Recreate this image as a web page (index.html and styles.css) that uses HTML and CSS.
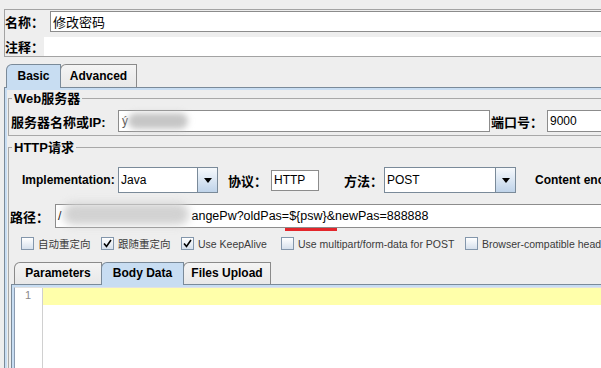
FILE: index.html
```html
<!DOCTYPE html>
<html lang="zh-CN">
<head>
    <meta charset="UTF-8">
    <title>HTTP请求</title>
    <link rel="stylesheet" href="styles.css">
</head>
<body>
<div class="page">
    <div class="meta">
        <div class="metaRow nameRow">
            <span class="label nameLabel">名称：</span>
            <div class="field nameField">修改密码</div>
        </div>
        <div class="metaRow commentRow">
            <span class="label commentLabel">注释：</span>
            <div class="commentArea"></div>
        </div>
    </div>

    <div class="tabbedPanels">
        <ul class="tabGroup">
            <li class="tab basicTab selectedTab">Basic</li>
            <li class="tab advancedTab">Advanced</li>
        </ul>
        <div class="tabContent">
            <div class="group webGroup">
                <div class="groupTitle">Web服务器</div>
                <div class="row serverRow">
                    <span class="label serverLabel">服务器名称或IP:</span>
                    <div class="field serverField"><span class="glyph">ý</span><span class="smudge"></span></div>
                    <span class="label portLabel">端口号：</span>
                    <div class="field portField">9000</div>
                </div>
            </div>

            <div class="group httpGroup">
                <div class="groupTitle">HTTP请求</div>
                <div class="row implRow">
                    <span class="label latin implLabel">Implementation:</span>
                    <div class="combo implCombo">
                        <span class="comboValue">Java</span>
                        <span class="comboButton"><i class="arrow"></i></span>
                    </div>
                    <span class="label protoLabel">协议：</span>
                    <div class="field protoField">HTTP</div>
                    <span class="label methodLabel">方法：</span>
                    <div class="combo methodCombo">
                        <span class="comboValue">POST</span>
                        <span class="comboButton"><i class="arrow"></i></span>
                    </div>
                    <span class="label latin encLabel">Content encoding:</span>
                </div>
                <div class="row pathRow">
                    <span class="label pathLabel">路径：</span>
                    <div class="field pathField">/<span class="smudge pathSmudge"></span>angePw?oldPas=${psw}&amp;newPas=888888</div>
                    <div class="mark"></div>
                </div>
                <div class="row checkRow">
                    <label class="check"><span class="box"></span>自动重定向</label>
                    <label class="check"><span class="box checked"><svg viewBox="0 0 11 11" width="11" height="11"><path d="M2 5.5 L4.5 8.5 L9 2" fill="none" stroke="#000" stroke-width="1.6"/></svg></span>跟随重定向</label>
                    <label class="check keepAlive"><span class="box checked"><svg viewBox="0 0 11 11" width="11" height="11"><path d="M2 5.5 L4.5 8.5 L9 2" fill="none" stroke="#000" stroke-width="1.6"/></svg></span>Use KeepAlive</label>
                    <label class="check multipart"><span class="box"></span>Use multipart/form-data for POST</label>
                    <label class="check browserCompat"><span class="box"></span>Browser-compatible headers</label>
                </div>

                <div class="subTabs">
                    <ul class="tabGroup subTabGroup">
                        <li class="tab paramTab">Parameters</li>
                        <li class="tab bodyTab selectedTab">Body Data</li>
                        <li class="tab filesTab">Files Upload</li>
                    </ul>
                    <div class="tabContent subContent">
                        <div class="editor">
                            <div class="gutter">1</div>
                            <div class="lines"><div class="currentLine"></div></div>
                        </div>
                    </div>
                </div>
            </div>
        </div>
    </div>
</div>
</body>
</html>
```

FILE: styles.css
```css
*{ margin: 0; padding: 0; box-sizing: border-box;}
html, body{ overflow: hidden;}
body{ background: #eeeeee; color: #000; font: 12px "Liberation Sans", "Noto Sans CJK SC", sans-serif;}
ul{ list-style: none;}
.page{ width: 720px;}

.label{ font-weight: bold; font-size: 13px; white-space: nowrap; flex-shrink: 0;}
.label.latin{ font-size: 12px;}
.field{ display: flex; align-items: center; flex-shrink: 0; height: 21px; padding: 0 3px; background: #fff; border: 1px solid #8c8c8c; white-space: nowrap;}

/* name / comment */
.meta{ margin: 9px 0 0 4px; padding-top: 1px; border: 1px solid #a3a3a3; border-right: none;}
.metaRow{ display: flex; align-items: center;}
.nameRow{ height: 21px;}
.nameLabel{ width: 45px;}
.nameField{ flex: 1; font-size: 13px; padding-left: 2px;}
.commentRow{ height: 19px; margin-top: 5px;}
.commentLabel{ width: 39px;}
.commentArea{ flex: 1; height: 19px; background: #fff;}

/* tabs */
.tabbedPanels{ margin: 7px 0 0 4px;}
.tabGroup{ display: flex; align-items: flex-start; height: 23px; padding-left: 2px;}
.tab{ height: 23px; line-height: 22px; text-align: center; font-weight: bold; background: linear-gradient(#f4f4f4, #e8e8e8); border: 1px solid #8a8a8a; border-bottom: none; border-top-left-radius: 6px; flex-shrink: 0;}
.tab + .tab{ margin-left: -1px;}
.selectedTab{ position: relative; z-index: 1; height: 24px; background: #c8ddf2; border-color: #7a8a99;}
.basicTab{ width: 55px;}
.advancedTab{ width: 77px;}
.tabContent{ border-top: 1px solid #7a8a99; border-left: 1px solid #7a8a99; box-shadow: inset 2px 2px 0 #c8ddf2;}

/* titled groups */
.group{ margin-left: 3px; border: 1px solid #a8a8a8; border-right: none;}
.groupTitle{ width: max-content; margin: -8px 0 0 3px; padding: 0 2px; background: #eeeeee; font-weight: bold; font-size: 13px; line-height: 15px;}
.webGroup{ margin-top: 10px; padding-bottom: 3px;}
.httpGroup{ margin-top: 11px; padding-bottom: 40px;}
.row{ display: flex; align-items: center;}

.serverRow{ height: 22px; margin-top: 4px; padding-left: 2px;}
.serverLabel{ width: 107px;}
.serverField{ position: relative; width: 372px; height: 22px;}
.glyph{ color: #555; font-size: 12px;}
.smudge{ display: inline-block; width: 60px; height: 16px; background: #c6c6c6; border-radius: 8px; filter: blur(3px);}
.portLabel{ width: 57px; padding-left: 1px;}
.portField{ flex: 1; height: 22px; padding-left: 2px;}

.implRow{ height: 26px; margin-top: 12px; padding-left: 13px;}
.implLabel{ width: 96px;}
.combo{ display: flex; flex-shrink: 0; height: 26px; background: #fff; border: 1px solid #7a8a99;}
.implCombo{ width: 100px;}
.methodCombo{ width: 132px;}
.comboValue{ flex: 1; padding-left: 2px; line-height: 24px;}
.comboButton{ display: flex; align-items: center; justify-content: center; width: 20px; border-left: 1px solid #7a8a99; background: linear-gradient(#f6f9fc, #bfd3e9);}
.arrow{ width: 0; height: 0; border-top: 5px solid #000; border-left: 4px solid transparent; border-right: 4px solid transparent;}
.protoLabel{ width: 43px; margin-left: 10px;}
.protoField{ width: 48px; padding-left: 2px;}
.methodLabel{ width: 40px; margin-left: 25px;}
.encLabel{ margin-left: 19px;}

.pathRow{ position: relative; height: 24px; margin-top: 11px; padding-left: 1px;}
.pathLabel{ width: 45px;}
.pathField{ flex: 1; height: 24px; padding-left: 2px; font-size: 12.5px;}
.pathSmudge{ width: 126px; height: 22px; margin: -4px 2px 0 2px; background: #d2d2d2; border-radius: 10px; filter: blur(4px);}
.mark{ position: absolute; left: 276px; top: 24px; width: 52px; height: 3px; background: #e3262b;}

.checkRow{ height: 13px; margin-top: 9px; padding-left: 12px;}
.check{ display: flex; align-items: center; gap: 4px; width: 80px; flex-shrink: 0; font-size: 10.5px; color: #3a3a3a; white-space: nowrap;}
.keepAlive{ width: 100px;}
.multipart{ width: 184px;}
.browserCompat{ width: auto;}
.box{ display: flex; align-items: center; justify-content: center; flex-shrink: 0; width: 13px; height: 13px; border: 1px solid #8396ab; background: linear-gradient(#ffffff, #d6e0ec);}

/* sub tabs + editor */
.subTabs{ margin: 12px 0 0 2px;}
.subTabGroup{ height: 22px; padding-left: 3px;}
.subTabGroup .tab{ height: 22px; line-height: 21px;}
.subTabGroup .selectedTab{ height: 23px;}
.paramTab{ width: 88px;}
.bodyTab{ width: 83px;}
.filesTab{ width: 88px;}
.subContent{ padding: 2px 0 0 2px;}
.editor{ display: flex; height: 100px; background: #fff; border-left: 1px solid #8c9bb0; border-top: 1px solid #e2e2e2;}
.gutter{ width: 28px; padding: 1px 0 0 10px; border-right: 1px solid #d0d0d0; color: #8a8a8a; font-size: 11px;}
.lines{ flex: 1;}
.currentLine{ height: 17px; background: #ffffaa;}
```
